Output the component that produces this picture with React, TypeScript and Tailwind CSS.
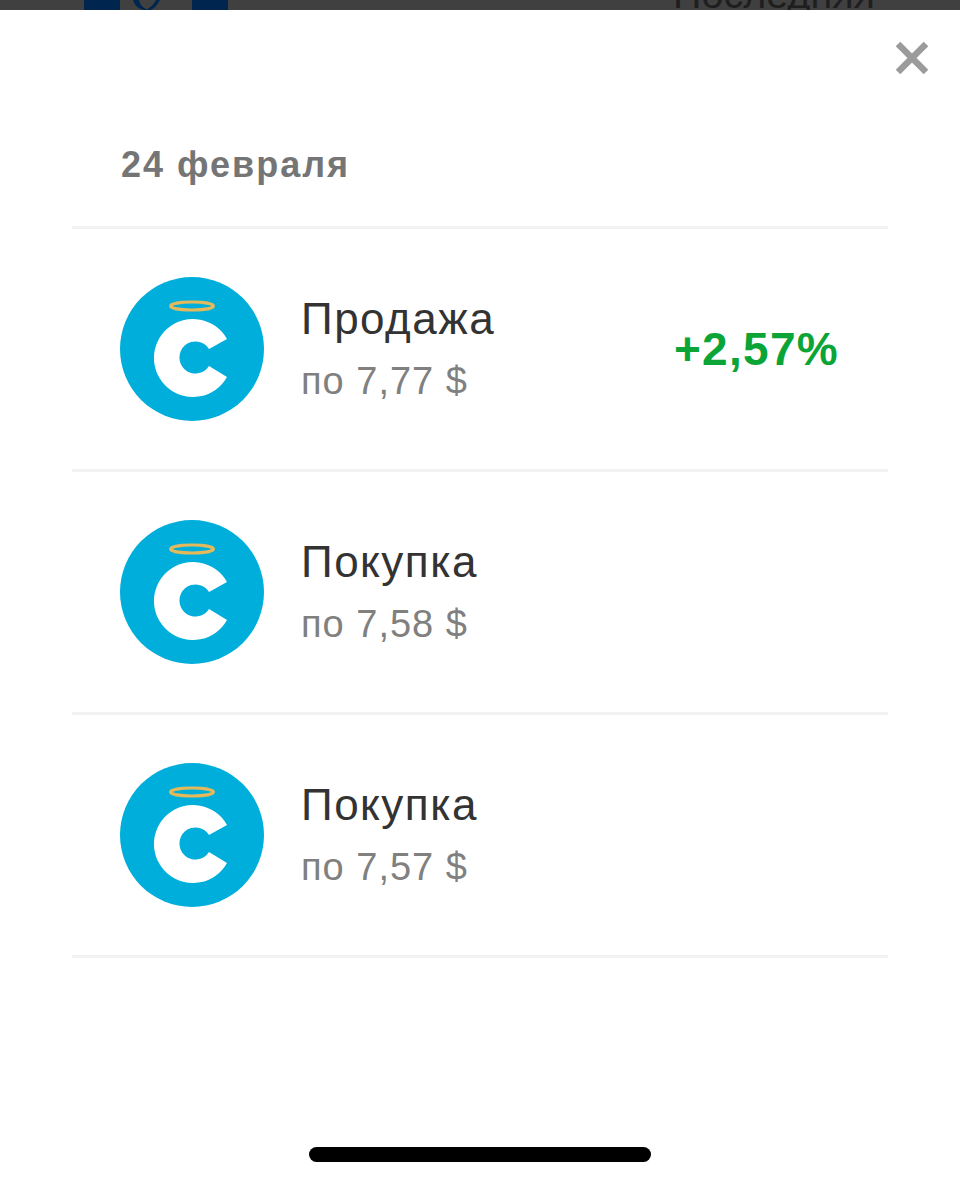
const ROWS = [
  { title: 'Продажа', price: 'по 7,77 $', change: '+2,57%' },
  { title: 'Покупка', price: 'по 7,58 $' },
  { title: 'Покупка', price: 'по 7,57 $' },
];

function Logo() {
  return (
    <svg width="144" height="144" viewBox="0 0 144 144" className="shrink-0">
      <circle cx="72" cy="72" r="72" fill="#00aedb" />
      <ellipse cx="72" cy="29" rx="21.5" ry="4" fill="none" stroke="#e3b95b" strokeWidth="3" />
      <path
        d="M107 62 A39 39 0 1 0 107 100 L89 89 A16 16 0 1 1 89 72 Z"
        fill="#fff"
      />
    </svg>
  );
}

export default function App() {
  return (
    <div className="w-[960px] h-[1186px] flex flex-col bg-white overflow-hidden font-['Liberation_Sans',sans-serif]">
      {/* Page behind the sheet */}
      <div className="h-[10px] shrink-0 bg-[#404040] overflow-hidden flex justify-between pl-[84px] pr-[85px]">
        <svg width="144" height="10" viewBox="0 0 144 10" className="shrink-0">
          <rect x="0" y="0" width="36" height="10" fill="#002650" />
          <rect x="108" y="0" width="36" height="10" fill="#002650" />
          <path d="M49 0 Q51 8 60 10 L64 10 Q56 7 55 0 Z M72 0 L76 0 Q72 8 66 10 L62 10 Q69 6 72 0 Z" fill="#002650" />
        </svg>
        <span className="text-[39.5px] leading-[10px] text-[#1e1e1e] -translate-y-[11px]">Последняя</span>
      </div>

      {/* Sheet */}
      <div className="relative flex-1 flex flex-col px-[72px]">
        <svg width="34" height="34" viewBox="0 0 34 34" className="absolute top-[31px] right-[31px]">
          <path d="M3 3 L31 31 M31 3 L3 31" stroke="#9b9b9b" strokeWidth="6.5" />
        </svg>

        <div className="h-[219px] flex items-end pb-[39px] pl-[49px] border-b-[3px] border-[#f2f2f2] text-[36px] leading-[44px] font-bold text-[#757575] tracking-[2px]">
          24 февраля
        </div>

        {ROWS.map((row, i) => (
          <div key={i} className="h-[243px] flex items-center pl-[48px] pr-[49px] border-b-[3px] border-[#f2f2f2]">
            <Logo />
            <div className="ml-[37px] flex-1 pt-[1px]">
              <div className="text-[44px] leading-[62px] text-[#333333] tracking-[1.5px]">{row.title}</div>
              <div className="text-[38px] leading-[62px] text-[#808080] tracking-[1px]">{row.price}</div>
            </div>
            {row.change && <div className="text-[46px] font-bold text-[#0aa536] tracking-[1.3px]">{row.change}</div>}
          </div>
        ))}

        <div className="mt-auto mb-[24px] mx-auto w-[342px] h-[15px] rounded-full bg-black" />
      </div>
    </div>
  );
}
